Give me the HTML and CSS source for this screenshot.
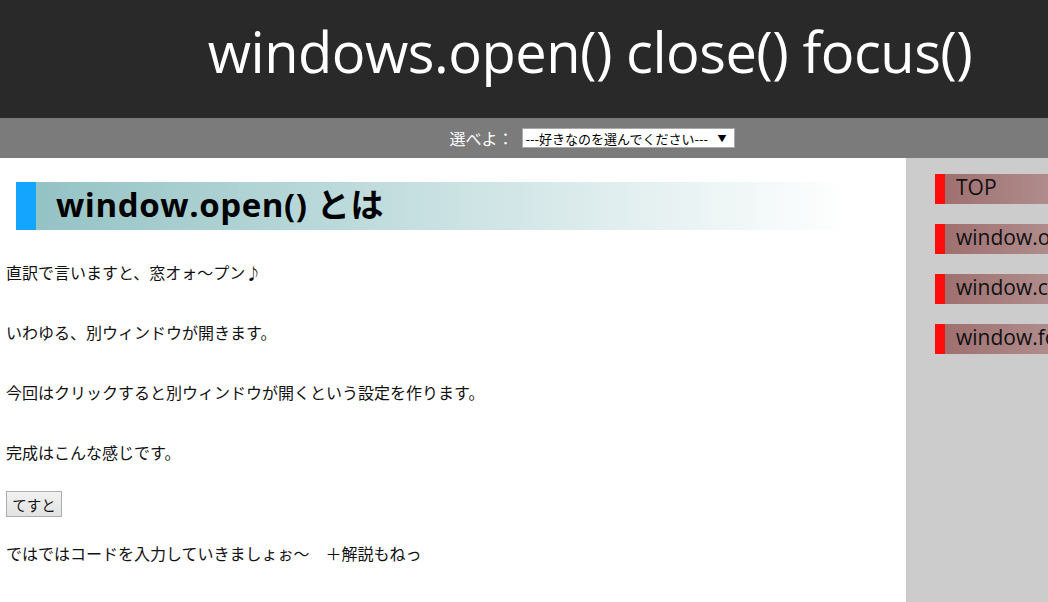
FILE: index.html
```html
<!DOCTYPE html>
<html lang="ja">
<head>
<meta charset="utf-8">
<title>windows.open() close() focus()</title>
<link rel="stylesheet" href="styles.css">
</head>
<body>
<div class="page">
  <header class="site-header">
    <h1 class="site-title">windows.open() close() focus()</h1>
  </header>
  <nav class="nav-bar">
    <label class="nav-label">選べよ：</label>
    <div class="fake-select">
      <span class="fake-select-text">---好きなのを選んでください---</span>
      <span class="fake-select-arrow">▼</span>
    </div>
  </nav>
  <div class="layout">
    <main class="main">
      <h2 class="section-title">window.open() とは</h2>
      <p class="para">直訳で言いますと、窓オォ～プン♪</p>
      <p class="para">いわゆる、別ウィンドウが開きます。</p>
      <p class="para">今回はクリックすると別ウィンドウが開くという設定を作ります。</p>
      <p class="para">完成はこんな感じです。</p>
      <button class="test-btn" type="button">てすと</button>
      <p class="para last">ではではコードを入力していきましょぉ～　＋解説もねっ</p>
    </main>
    <aside class="sidebar">
      <a class="side-item">TOP</a>
      <a class="side-item">window.open()</a>
      <a class="side-item">window.close()</a>
      <a class="side-item">window.focus()</a>
    </aside>
  </div>
</div>
</body>
</html>
```

FILE: styles.css
```css
html, body {
  margin: 0;
  padding: 0;
  overflow: hidden;
  background: #ffffff;
}

.page {
  width: 1180px;
  font-family: "Open Sans", "Noto Sans CJK JP", sans-serif;
  color: #111111;
}

.site-header {
  background: #292929;
  height: 118px;
  box-sizing: border-box;
  padding-bottom: 17px;
  display: flex;
  align-items: center;
  justify-content: center;
}

.site-title {
  margin: 0;
  color: #ffffff;
  font-weight: normal;
  font-size: 56px;
  line-height: 1;
  font-family: "Open Sans", sans-serif;
  letter-spacing: -0.5px;
}

.nav-bar {
  background: #7b7b7b;
  height: 40px;
  display: flex;
  align-items: center;
  justify-content: center;
  gap: 8px;
  padding-left: 4px;
}

.nav-label {
  color: #ffffff;
  font-size: 16px;
  font-family: "Noto Sans CJK JP", sans-serif;
}

.fake-select {
  width: 201px;
  height: 18px;
  background: #ffffff;
  border: 1px solid #a9a9a9;
  display: flex;
  align-items: center;
  justify-content: space-between;
  padding: 0 7px 0 3px;
  box-sizing: content-box;
  font-size: 13px;
  font-family: "Noto Sans CJK JP", sans-serif;
  color: #000000;
}

.fake-select-arrow {
  font-size: 9px;
}

.layout {
  display: flex;
  align-items: stretch;
  min-height: 460px;
}

.main {
  width: 906px;
  padding: 24px 56px 0 0;
  box-sizing: border-box;
}

.section-title {
  margin: 0 0 30px 16px;
  height: 48px;
  border-left: 20px solid #14a5ff;
  background: linear-gradient(to right, #94c3c5, #ffffff);
  font-family: "Open Sans", "Noto Sans CJK JP", sans-serif;
  font-weight: bold;
  font-size: 33px;
  line-height: 46px;
  padding-left: 20px;
  color: #000000;
  letter-spacing: 0.6px;
}

.para {
  margin: 0 0 36px 6px;
  font-family: "Noto Sans CJK JP", sans-serif;
  font-size: 16px;
  line-height: 24px;
  color: #111111;
}

.para.last {
  margin-top: 0;
}

.test-btn {
  display: block;
  margin: -9px 0 24px 6px;
  width: 56px;
  height: 26px;
  padding: 0;
  font-family: "Noto Sans CJK JP", sans-serif;
  font-size: 14.5px;
  color: #111111;
  background: linear-gradient(#f2f2f2, #e2e2e2);
  border: 1px solid #adadad;
  border-radius: 0;
}

.sidebar {
  flex: 1;
  background: #cccccc;
  padding: 16px 29px 0 29px;
  display: flex;
  flex-direction: column;
  gap: 20px;
}

.side-item {
  display: block;
  height: 30px;
  line-height: 27px;
  border-left: 10px solid #ff0c0c;
  background: linear-gradient(to right, #9f7070, #c0a8a8);
  padding-left: 11px;
  font-size: 21px;
  font-family: "Open Sans", sans-serif;
  color: #111111;
  white-space: nowrap;
  overflow: hidden;
}
```
